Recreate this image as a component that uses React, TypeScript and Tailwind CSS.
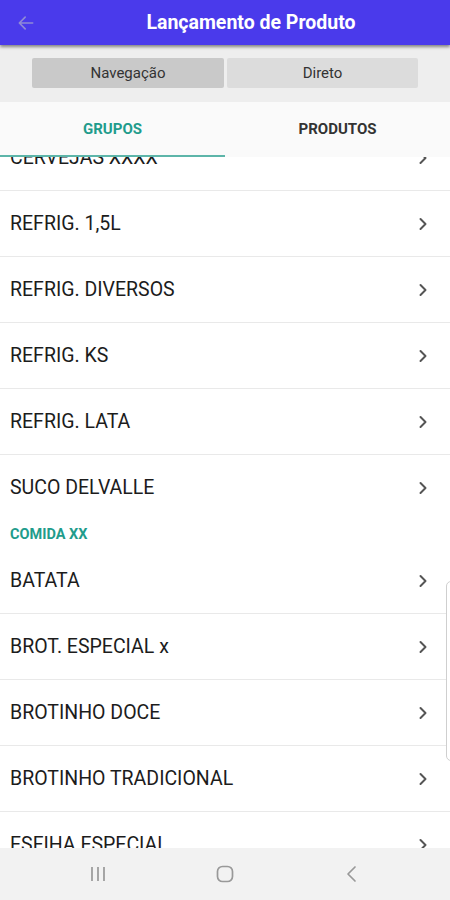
import React from 'react';

const font = { fontFamily: 'Roboto, "Noto Sans", sans-serif' };

type Item = { kind: 'row'; label: string } | { kind: 'section'; label: string };

const items: Item[] = [
  { kind: 'row', label: 'CERVEJAS XXXX' },
  { kind: 'row', label: 'REFRIG. 1,5L' },
  { kind: 'row', label: 'REFRIG. DIVERSOS' },
  { kind: 'row', label: 'REFRIG. KS' },
  { kind: 'row', label: 'REFRIG. LATA' },
  { kind: 'row', label: 'SUCO DELVALLE' },
  { kind: 'section', label: 'COMIDA XX' },
  { kind: 'row', label: 'BATATA' },
  { kind: 'row', label: 'BROT. ESPECIAL x' },
  { kind: 'row', label: 'BROTINHO DOCE' },
  { kind: 'row', label: 'BROTINHO TRADICIONAL' },
  { kind: 'row', label: 'ESFIHA ESPECIAL' },
];

function Chevron() {
  return (
    <svg width="10" height="14" viewBox="0 0 10 14" fill="none">
      <path d="M2.5 2 L7.5 7 L2.5 12" stroke="#555" strokeWidth="2" strokeLinecap="round" strokeLinejoin="round" />
    </svg>
  );
}

function Row({ label, last }: { label: string; last: boolean }) {
  return (
    <div className={`flex h-[66px] items-center justify-between pl-[10px] pr-[22px] ${last ? '' : 'border-b border-[#e9e9e9]'}`}>
      <span className="text-[19.5px] text-[#1c1c1c]">{label}</span>
      <Chevron />
    </div>
  );
}

export default function App() {
  return (
    <div className="flex h-[900px] w-[450px] flex-col overflow-hidden bg-white" style={font}>
      {/* Toolbar */}
      <div className="relative z-20 flex h-[45px] shrink-0 items-center bg-[#4a3aeb] shadow-[0_2px_3px_rgba(0,0,0,0.45)]">
        <div className="flex w-[52px] items-center justify-center">
          <svg width="20" height="20" viewBox="0 0 24 24" fill="none">
            <path d="M20 12H5M11 5l-7 7 7 7" stroke="#8f8ad6" strokeWidth="2" strokeLinecap="round" strokeLinejoin="round" />
          </svg>
        </div>
        <div className="flex-1 text-center text-[19.5px] font-bold text-white">Lançamento de Produto</div>
      </div>

      {/* Segmented */}
      <div className="flex h-[57px] shrink-0 items-center justify-center gap-[3px] bg-[#eeeeee] pb-[1px]">
        <div className="flex h-[30px] w-[192px] items-center justify-center rounded-[2px] bg-[#c9c9c9] text-[15px] text-[#333]">Navegação</div>
        <div className="flex h-[30px] w-[191px] items-center justify-center rounded-[2px] bg-[#dcdcdc] text-[15px] text-[#333]">Direto</div>
      </div>

      {/* Tabs */}
      <div className="relative z-10 flex h-[55px] shrink-0 bg-[#fafafa]">
        <div className="flex flex-1 flex-col">
          <div className="flex flex-1 items-center justify-center pt-[1px] text-[15px] font-bold text-[#1f9c8c]">GRUPOS</div>
          <div className="h-[2px] bg-[#5db5a9]" />
        </div>
        <div className="flex flex-1 flex-col">
          <div className="flex flex-1 items-center justify-center pt-[1px] text-[15px] font-bold text-[#333]">PRODUTOS</div>
          <div className="h-[2px]" />
        </div>
      </div>

      {/* List */}
      <div className="relative flex-1 overflow-hidden bg-white">
        <div className="mt-[-32px]">
          {items.map((it, i) =>
            it.kind === 'section' ? (
              <div key={i} className="flex h-[27px] items-center pl-[10px] text-[14.5px] font-bold text-[#1f9c8c]">
                {it.label}
              </div>
            ) : (
              <Row key={i} label={it.label} last={items[i + 1]?.kind === 'section'} />
            )
          )}
        </div>
        <div className="absolute right-[-6px] top-[424px] h-[180px] w-[10px] rounded-[5px] border border-[#cfcfcf] bg-white" />
      </div>

      {/* System nav */}
      <div className="flex h-[52px] shrink-0 items-center justify-center gap-[106px] bg-[#f2f2f2]">
        <svg width="20" height="18" viewBox="0 0 20 18">
          <path d="M4 2v14M10 2v14M16 2v14" stroke="#999" strokeWidth="1.7" />
        </svg>
        <svg width="22" height="22" viewBox="0 0 22 22">
          <rect x="3.5" y="3.5" width="15" height="15" rx="5" fill="none" stroke="#999" strokeWidth="1.7" />
        </svg>
        <svg width="20" height="20" viewBox="0 0 20 20">
          <path d="M13 3L6 10l7 7" fill="none" stroke="#999" strokeWidth="1.7" strokeLinecap="round" strokeLinejoin="round" />
        </svg>
      </div>
    </div>
  );
}
